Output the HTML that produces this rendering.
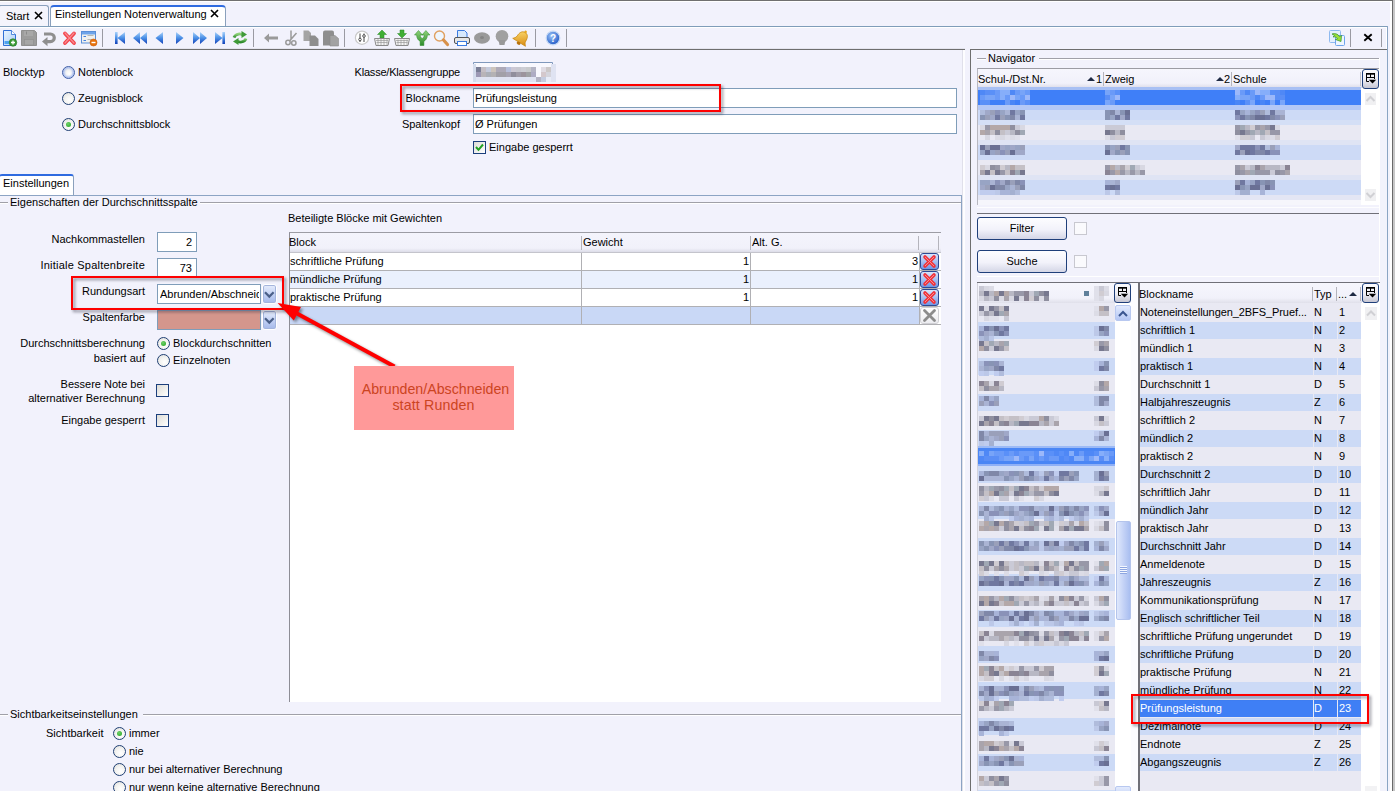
<!DOCTYPE html>
<html lang="de"><head><meta charset="utf-8"><title>Einstellungen Notenverwaltung</title>
<style>
*{box-sizing:border-box;margin:0;padding:0}
html,body{width:1395px;height:791px;overflow:hidden}
body{background:#f2f2fc;font-family:"Liberation Sans",sans-serif;font-size:11px;color:#000;position:relative;line-height:13px}
.a{position:absolute}
.t{position:absolute;white-space:nowrap;line-height:13px;height:13px}
.r{text-align:right}
.hl{position:absolute;height:1px;background:#a0a0a8}
.et{box-shadow:0 1px 0 #fff}
.vl{position:absolute;width:1px;background:#a0a0a8}
.inp{position:absolute;background:#fff;border:1px solid #7f9db9}
.radio{position:absolute;width:13px;height:13px;border-radius:50%;border:1px solid #1f3f73;background:radial-gradient(circle at 60% 65%,#fff 0,#f4f4f2 45%,#dcdcd8 100%)}
.radio.on::after{content:"";position:absolute;left:3px;top:3px;width:5px;height:5px;border-radius:50%;background:radial-gradient(circle at 40% 35%,#6fd06a,#23a41f)}
.chk{position:absolute;width:13px;height:13px;border:1px solid #1c3f7c;background:linear-gradient(135deg,#dddcd6,#fff)}
.redbox{position:absolute;border:2px solid #fe0000;filter:drop-shadow(2.5px 2.5px 1.6px rgba(30,30,50,.5))}
.ddb{width:15px;height:20px;border:1px solid #fff;border-radius:3px;background:linear-gradient(#e6edfc 0,#c4d2f4 50%,#a4b8ea 100%);box-shadow:inset 0 0 0 1px #a4b4dc}
.ddb svg{position:absolute;left:0;top:0}
.xb{width:19px;height:17px;border:1px solid #2c4a94;border-radius:3px;background:linear-gradient(#d8e4fc 0,#a9c0f0 50%,#6f96e4 100%);overflow:hidden}
.xb svg{position:absolute;left:-1px;top:-1px}
.xb.off{border-color:#d0d0d4;background:linear-gradient(#fff,#ececf0)}
.tri{position:absolute;width:0;height:0;border-left:4px solid transparent;border-right:4px solid transparent;border-bottom:4px solid #1e2a44}
.cho{position:absolute;width:17px;height:20px;border:1px solid #1f3f7a;border-radius:3px;background:linear-gradient(#fbfbfe 0,#ececf4 55%,#c6c6d2 100%)}
.btn{position:absolute;width:90px;height:23px;border:1px solid #1f3f7a;border-radius:3px;background:linear-gradient(#fdfdff 0,#f2f2fa 55%,#d4d6e6 100%);text-align:center;line-height:20px;font-size:11px}
.sbb{position:absolute;width:16px;height:16px;border:1px solid #b8c8f0;border-radius:2px;background:linear-gradient(#e2eafd,#b4c6f4)}
.cho svg{position:absolute;left:0;top:0}
</style></head><body>
<!-- window chrome -->
<div class="a" style="left:0;top:0;width:1392px;height:1px;background:#707070"></div>
<div class="a" style="left:0;top:1px;width:1392px;height:1px;background:#fff"></div>
<div class="a" style="left:1390px;top:1px;width:2px;height:790px;background:#fff"></div>
<div class="a" style="left:1392px;top:0;width:1px;height:791px;background:#6a6a6a"></div>
<div class="a" style="left:1393px;top:0;width:2px;height:791px;background:#c8c8c8"></div>
<!-- tabs -->
<div class="a" style="left:0;top:26px;width:1388px;height:1px;background:#7f9db9"></div>
<div class="a" style="left:1387px;top:26px;width:1px;height:765px;background:#8aa4c4"></div>
<div class="a" style="left:0;top:27px;width:1387px;height:1px;background:#fff"></div>
<div class="a" style="left:1386px;top:27px;width:1px;height:22px;background:#fff"></div>
<div class="a" style="left:-2px;top:5px;width:51px;height:21px;border:1px solid #8aa0bc;border-bottom:none;border-radius:3px 3px 0 0;background:#f4f4fc"></div>
<div class="t" style="left:6px;top:10px">Start</div>
<svg class="a" style="left:34px;top:11px" width="9" height="9" viewBox="0 0 9 9"><path d="M1 1L8 8M8 1L1 8" stroke="#000" stroke-width="1.6"/></svg>
<div class="a" style="left:50px;top:5px;width:176px;height:21px;border:1px solid #8aa0bc;border-bottom:none;border-top:2px solid #2f6be0;border-radius:4px 4px 0 0;background:#fff"></div>
<div class="t" style="left:55px;top:8px">Einstellungen Notenverwaltung</div>
<svg class="a" style="left:210px;top:9px" width="9" height="9" viewBox="0 0 9 9"><path d="M1 1L8 8M8 1L1 8" stroke="#000" stroke-width="1.6"/></svg>
<!--TABS_END-->
<!-- toolbar -->
<svg class="a" style="left:0;top:28px" width="1388" height="21" viewBox="0 28 1388 21">
<defs>
<linearGradient id="gb" x1="0" y1="0" x2="0" y2="1"><stop offset="0" stop-color="#a9d2fa"/><stop offset=".5" stop-color="#4a8fe6"/><stop offset="1" stop-color="#1240b8"/></linearGradient>
<linearGradient id="gg" x1="0" y1="0" x2="0" y2="1"><stop offset="0" stop-color="#8fd27a"/><stop offset="1" stop-color="#2c8a2a"/></linearGradient>
<linearGradient id="gdoc" x1="0" y1="0" x2="1" y2="1"><stop offset="0" stop-color="#eaf4ff"/><stop offset="1" stop-color="#a8cdf6"/></linearGradient>
<linearGradient id="gold" x1="0" y1="0" x2="1" y2="1"><stop offset="0" stop-color="#ffe27a"/><stop offset="1" stop-color="#d88a10"/></linearGradient>
<radialGradient id="ghelp" cx=".4" cy=".35" r=".7"><stop offset="0" stop-color="#9cc4f8"/><stop offset="1" stop-color="#1c55c4"/></radialGradient>
</defs>
<!-- separators -->
<g stroke="#9a9aa2" stroke-width="1"><path d="M102.5 29v18M253.5 29v18M344.5 29v18M535.5 29v18M566.5 29v18M1350.5 29v18M1381.5 29v18"/></g>
<!-- new doc -->
<path d="M3.5 30.500h8l4 4v11h-12z" fill="url(#gdoc)" stroke="#2f6fd6"/><path d="M11.500 30.500v4h4" fill="#fff" stroke="#2f6fd6" stroke-width=".8"/><rect x="4.500" y="41" width="7" height="3" fill="#4fa3ee"/>
<circle cx="13" cy="42.500" r="3.800" fill="#3a9a35" stroke="#2a7a28" stroke-width=".6"/><path d="M11 42.500h4M13 40.500v4" stroke="#fff" stroke-width="1.300"/>
<!-- save gray -->
<path d="M21.500 30.500h13l2 2v13h-15z" fill="#9c9c9c" stroke="#909090"/><rect x="24" y="31" width="9" height="5" fill="#a8a8a8"/><rect x="26" y="31.500" width="1" height="3" fill="#8a8a8a"/><rect x="24.500" y="39.500" width="9" height="5.500" fill="#a6a6a6" stroke="#8e8e8e" stroke-width=".6"/>
<!-- undo gray -->
<path d="M44 34h6.500a3.800 3.800 0 0 1 0 7.600h-4" fill="none" stroke="#8f8f8f" stroke-width="3.200"/><path d="M42 41.600l5.500-4.600v9.200z" fill="#8f8f8f"/>
<!-- red X -->
<path d="M65 33.500l9 9.500M74 33.500l-9 9.500" stroke="#f2444c" stroke-width="3.800" stroke-linecap="round"/><path d="M65 33l9 10M74 33l-9 10" stroke="#f98a90" stroke-width="1.200" stroke-linecap="round"/>
<!-- form minus -->
<rect x="81.500" y="31.500" width="14" height="11.500" fill="#f0f0ee" stroke="#5a8fd8"/><rect x="82" y="32" width="13" height="2.500" fill="#6ea4ea"/><path d="M83.500 36.500h2.500M83.500 40.500h2.500" stroke="#3f7fe0" stroke-width="1.200"/><path d="M87.500 35.500h6M87.500 39.500h4" stroke="#b8b8b4" stroke-width="1"/>
<circle cx="93.500" cy="42.500" r="3.500" fill="#e8720c" stroke="#c85a08" stroke-width=".6"/><rect x="91.500" y="41.800" width="4" height="1.400" fill="#fff"/>
<!-- nav blue -->
<g fill="url(#gb)">
<rect x="115" y="32" width="2.600" height="12"/><path d="M125 32v12l-7.500-6z"/>
<path d="M140 32v12l-7-6zM147 32v12l-7-6z"/>
<path d="M163 32v12l-7.500-6z"/>
<path d="M176 32v12l7.500-6z"/>
<path d="M193 32v12l7-6zM200 32v12l7-6z"/>
<path d="M215 32v12l7.500-6z"/><rect x="222.400" y="32" width="2.600" height="12"/>
</g>
<!-- refresh green -->
<g fill="none" stroke="url(#gg)" stroke-width="2.800"><path d="M234 37.500c1.500-4 7-4.500 9.500-2"/><path d="M246 38.500c-1.500 4-7 4.500-9.500 2"/></g>
<path d="M241.500 31l5.500 3.500-5.500 3.500z" fill="#3f9a38"/><path d="M238.500 45l-5.500-3.500 5.500-3.500z" fill="#3f9a38"/>
<!-- arrow left gray -->
<path d="M264 38l5-4.500v3h9v3h-9v3z" fill="#9a9a9a"/>
<!-- scissors gray -->
<g fill="none" stroke="#9a9a9a" stroke-width="1.500"><path d="M291 30.500v9M296.500 33l-7 8"/><circle cx="288" cy="42.500" r="2.200"/><circle cx="293.800" cy="43" r="2.200"/></g>
<!-- copy gray -->
<path d="M303.500 30.500h5l2.500 2.500v8h-7.500z" fill="#a4a4a4"/><path d="M309.500 35.500h5.500l3.500 3.500v7h-9z" fill="#8e8e8e"/>
<!-- paste gray -->
<path d="M323 32.500q0-2 2-2h7q2 0 2 2v13h-11z" fill="#8e8e8e"/><path d="M330 35.500h5l3.500 3v7.500h-8.500z" fill="#a2a2a2" stroke="#8a8a8a" stroke-width=".6"/>
<!-- sliders circle -->
<circle cx="362" cy="37.700" r="6.600" fill="#fff" stroke="#c9c9c9" stroke-width="1.200"/><path d="M360 33.500v8.500M364 33.500v8.500" stroke="#444" stroke-width="1"/><circle cx="360" cy="39.500" r="1.300" fill="#fff" stroke="#333" stroke-width=".8"/><circle cx="364" cy="36" r="1.300" fill="#fff" stroke="#333" stroke-width=".8"/>
<!-- basket up -->
<path d="M382 30l4.500 4.500h-2.500v3.500h-4v-3.500h-2.500z" fill="#3fae34" stroke="#2a8a26" stroke-width=".5"/>
<path d="M374.500 38.500h15l-1.500 7h-12z" fill="#f4f4f4" stroke="#8a8a8a"/><path d="M376 40.500h12M376.500 42.500h11M378 39v6M381 39v6M384 39v6M387 39v6" stroke="#9a9a9a" stroke-width=".7"/>
<!-- basket down -->
<path d="M402 38l4.500-4.500h-2.500v-3.500h-4v3.500h-2.500z" fill="#3fae34" stroke="#2a8a26" stroke-width=".5"/>
<path d="M394.500 38.500h15l-1.500 7h-12z" fill="#f4f4f4" stroke="#8a8a8a"/><path d="M396 40.500h12M396.500 42.500h11M398 39.500v6M401 39.500v6M404 39.500v6M407 39.500v6" stroke="#9a9a9a" stroke-width=".7"/>
<!-- fork green -->
<path d="M414.500 35l4-4.500 4 4.500h-2.300c0 2 1 3 2 3.500 1-.5 2-1.500 2-3.500h-2.300l4-4.500 4 4.500h-2.500c0 3.500-2 5.500-3.500 6.300v4.200h-3.800v-4.200c-1.500-.8-3.500-2.800-3.500-6.300z" fill="url(#gg)" stroke="#2a8a26" stroke-width=".5"/>
<!-- magnifier -->
<circle cx="439.500" cy="36" r="5" fill="#eef6ff" stroke="#e0a060" stroke-width="1.400"/><path d="M443.500 40l4 4.500" stroke="#d8914a" stroke-width="3.200" stroke-linecap="round"/>
<!-- printer -->
<path d="M457.500 30.500h7l2.500 2.500v5h-9.500z" fill="#d6e8fc" stroke="#3b7be0"/><rect x="454.500" y="37.500" width="15" height="6" rx="1.500" fill="#e6e6e6" stroke="#555"/><rect x="457.500" y="41.500" width="9" height="4" fill="#fff" stroke="#3b7be0"/>
<!-- gray oval -->
<ellipse cx="482" cy="38" rx="8" ry="5.800" fill="#9a9a9a"/><ellipse cx="482" cy="37.500" rx="2" ry="1.600" fill="#858585"/>
<!-- gray bulb -->
<circle cx="502" cy="36.300" r="6.300" fill="#a0a0a0"/><path d="M498.500 40h7l-1 5h-5z" fill="#989898"/>
<!-- bell -->
<g transform="rotate(32 521.5 38.500)"><path d="M521.500 31.500c3.800 0 5 3.500 5 7 0 2 1.500 3.500 2.500 4.500h-15c1-1 2.500-2.500 2.500-4.500 0-3.500 1.200-7 5-7z" fill="url(#gold)" stroke="#c8860c" stroke-width=".7"/><circle cx="521.500" cy="30.800" r="1.300" fill="#e8a820"/><ellipse cx="521.500" cy="44" rx="2" ry="1.500" fill="#b8720c"/></g>
<!-- help -->
<circle cx="553" cy="38" r="6.800" fill="url(#ghelp)" stroke="#c4d8f4" stroke-width="1.200"/>
<text x="553" y="42" font-family="Liberation Sans,sans-serif" font-size="10" font-weight="bold" fill="#fff" text-anchor="middle">?</text>
<!-- right icons -->
<rect x="1329.500" y="30.500" width="11" height="12" rx="1" fill="#e4f0fe" stroke="#8fbaf0"/><rect x="1335.500" y="35.500" width="9" height="10" rx="1" fill="#eef6ff" stroke="#6ea4ec"/>
<path d="M1332 34c3-1 6 0 7.500 2.500l2-1-.5 6-5.500-2 2-1c-1-1.500-3-2-4.500-1.500l1.500-1.500z" fill="#9adf3a" stroke="#2f8f2a" stroke-width=".7"/>
<path d="M1364.300 34.300l7.400 6.400M1371.700 34.300l-7.400 6.400" stroke="#000" stroke-width="1.900"/>
</svg>
<div class="a" style="left:0;top:49px;width:965px;height:1px;background:#6e6e6e"></div>
<div class="a" style="left:0;top:48px;width:965px;height:1px;background:#e4e4ee"></div>
<!--TOOLBAR_END-->
<!-- form top -->
<div class="t" style="left:3px;top:66px">Blocktyp</div>
<div class="radio" style="left:62px;top:66px;border-color:#3f5fa8;box-shadow:inset 0 0 2px 1.5px #a8bcf0"></div>
<div class="t" style="left:78px;top:66px">Notenblock</div>
<div class="radio" style="left:62px;top:92px"></div>
<div class="t" style="left:78px;top:92px">Zeugnisblock</div>
<div class="radio on" style="left:62px;top:118px"></div>
<div class="t" style="left:78px;top:118px">Durchschnittsblock</div>
<div class="t r" style="left:300px;width:160px;top:66px;letter-spacing:-.2px">Klasse/Klassengruppe</div>
<svg class="a" style="left:470px;top:60px;filter:blur(.3px)" width="90" height="24" viewBox="470 60 90 24"><rect x="473" y="63" width="80" height="14" fill="#f8f8fe"/><rect x="476" y="67" width="5" height="5" fill="#7a7e96"/><rect x="476" y="72" width="5" height="5" fill="#9c98b4"/><rect x="481" y="67" width="5" height="5" fill="#c4bec4"/><rect x="481" y="72" width="5" height="5" fill="#b8b4b8"/><rect x="486" y="67" width="5" height="5" fill="#c4cadc"/><rect x="486" y="72" width="5" height="5" fill="#acb0b8"/><rect x="491" y="67" width="5" height="5" fill="#ccc4bc"/><rect x="491" y="72" width="5" height="5" fill="#b4b2b4"/><rect x="496" y="67" width="5" height="5" fill="#aeaab8"/><rect x="496" y="72" width="5" height="5" fill="#a2a0a8"/><rect x="501" y="67" width="5" height="5" fill="#aeaab8"/><rect x="501" y="72" width="5" height="5" fill="#a2a0a8"/><rect x="506" y="67" width="5" height="5" fill="#b8c0dc"/><rect x="506" y="72" width="5" height="5" fill="#a8a4b4"/><rect x="511" y="67" width="5" height="5" fill="#ccc8d4"/><rect x="511" y="72" width="5" height="5" fill="#908e9c"/><rect x="516" y="67" width="5" height="5" fill="#c8c8d0"/><rect x="516" y="72" width="5" height="5" fill="#a09ca8"/><rect x="521" y="67" width="5" height="5" fill="#cccdd4"/><rect x="521" y="72" width="5" height="5" fill="#9c949c"/><rect x="526" y="67" width="5" height="5" fill="#c8cacc"/><rect x="526" y="72" width="5" height="5" fill="#a0a2a4"/><rect x="531" y="67" width="5" height="5" fill="#b4b4c4"/><rect x="531" y="72" width="5" height="5" fill="#aeacc4"/><rect x="541" y="67" width="5" height="5" fill="#e0dce4"/><rect x="546" y="67" width="5" height="5" fill="#ccc8c8"/><rect x="541" y="72" width="5" height="5" fill="#d4c8cc"/><rect x="546" y="72" width="5" height="5" fill="#d4d4dc"/><rect x="473" y="77" width="83" height="5" fill="#dfe3f2"/><rect x="536" y="77" width="5" height="5" fill="#b4b4c4"/><rect x="541" y="77" width="5" height="5" fill="#c4cce0"/><rect x="546" y="77" width="5" height="5" fill="#e8ecf8"/><rect x="473" y="64" width="3" height="18" fill="#d4dcec"/><rect x="551" y="64" width="5" height="18" fill="#dfe3f2"/><path d="M473.500 64v-1.500h79v1.500" fill="none" stroke="#7f98bc"/></svg>
<div class="t r" style="left:300px;width:160px;top:92px">Blockname</div>
<div class="inp" style="left:473px;top:88px;width:484px;height:20px"></div>
<div class="t" style="left:475px;top:92px">Prüfungsleistung</div>
<div class="t r" style="left:300px;width:160px;top:118px">Spaltenkopf</div>
<div class="inp" style="left:473px;top:114px;width:484px;height:20px"></div>
<div class="t" style="left:475px;top:118px">Ø Prüfungen</div>
<div class="chk" style="left:473px;top:141px"></div>
<svg class="a" style="left:475px;top:143px" width="9" height="9" viewBox="0 0 9 9"><path d="M1 4l2.500 2.800L8 1.500" fill="none" stroke="#21a121" stroke-width="2"/></svg>
<div class="t" style="left:489px;top:141px">Eingabe gesperrt</div>
<div class="redbox" style="left:400px;top:84px;width:321px;height:28px"></div>
<!--FORM_END-->
<!-- settings tab -->
<div class="a" style="left:0;top:195px;width:962px;height:1px;background:#8ca4c4"></div>
<div class="a" style="left:961px;top:195px;width:1px;height:596px;background:#8ca4c4"></div>
<div class="a" style="left:962px;top:50px;width:1px;height:741px;background:#e0e0ea"></div>
<div class="a" style="left:963px;top:50px;width:2px;height:741px;background:#fdfdff"></div>
<div class="a" style="left:-1px;top:174px;width:75px;height:21px;border:1px solid #8aa0bc;border-top:2px solid #2f6be0;border-bottom:none;border-radius:3px 3px 0 0;background:#fff"></div>
<div class="t" style="left:3px;top:177px">Einstellungen</div>
<!-- groupbox 1 -->
<div class="hl et" style="left:0;top:202px;width:8px"></div>
<div class="hl et" style="left:200px;top:202px;width:761px"></div>
<div class="t" style="left:10px;top:196px">Eigenschaften der Durchschnittsspalte</div>
<div class="t r" style="left:0;width:145px;top:233px">Nachkommastellen</div>
<div class="inp" style="left:157px;top:232px;width:40px;height:20px"></div>
<div class="t r" style="left:157px;width:35px;top:236px">2</div>
<div class="t r" style="left:0;width:145px;top:259px;letter-spacing:.22px">Initiale Spaltenbreite</div>
<div class="inp" style="left:157px;top:258px;width:40px;height:20px"></div>
<div class="t r" style="left:157px;width:35px;top:262px">73</div>
<div class="t r" style="left:0;width:145px;top:285px">Rundungsart</div>
<div class="inp" style="left:157px;top:284px;width:104px;height:20px;overflow:hidden"></div>
<div class="t" style="left:160px;top:288px;width:99px;overflow:hidden">Abrunden/Abschneiden</div>
<div class="a ddb" style="left:262px;top:284px"><svg width="13" height="18" viewBox="0 0 13 18"><path d="M2 7.300l4.300 4.300 4.300-4.300" fill="none" stroke="#4a5f88" stroke-width="2.200"/></svg></div>
<div class="t r" style="left:0;width:145px;top:311px">Spaltenfarbe</div>
<div class="inp" style="left:157px;top:310px;width:104px;height:20px;background:#d4968c"></div>
<div class="a ddb" style="left:262px;top:310px"><svg width="13" height="18" viewBox="0 0 13 18"><path d="M2 7.300l4.300 4.300 4.300-4.300" fill="none" stroke="#4a5f88" stroke-width="2.200"/></svg></div>
<div class="t r" style="left:0;width:145px;top:337px">Durchschnittsberechnung</div>
<div class="t r" style="left:0;width:145px;top:352px">basiert auf</div>
<div class="radio on" style="left:157px;top:337px"></div>
<div class="t" style="left:173px;top:337px">Blockdurchschnitten</div>
<div class="radio" style="left:157px;top:354px"></div>
<div class="t" style="left:173px;top:354px">Einzelnoten</div>
<div class="t r" style="left:0;width:145px;top:378px">Bessere Note bei</div>
<div class="t r" style="left:0;width:145px;top:392px">alternativer Berechnung</div>
<div class="chk" style="left:156px;top:384px"></div>
<div class="t r" style="left:0;width:145px;top:414px">Eingabe gesperrt</div>
<div class="chk" style="left:156px;top:414px"></div>
<!-- grid -->
<div class="t" style="left:288px;top:212px">Beteiligte Blöcke mit Gewichten</div>
<div class="a" style="left:289px;top:232px;width:652px;height:470px;background:#fff;border-left:1px solid #8e8e96;border-top:1px solid #9c9ca4"></div>
<div class="a" style="left:290px;top:233px;width:651px;height:19px;background:linear-gradient(#f4f4fc 0,#f1f1fa 80%,#dcdce8 100%)"></div>
<div class="vl" style="left:581px;top:236px;height:14px;background:#b4b4bc"></div>
<div class="vl" style="left:750px;top:236px;height:14px;background:#b4b4bc"></div>
<div class="vl" style="left:918px;top:236px;height:14px;background:#b4b4bc"></div>
<div class="vl" style="left:938px;top:236px;height:14px;background:#b4b4bc"></div>
<div class="t" style="left:289px;top:236px">Block</div>
<div class="t" style="left:583px;top:236px">Gewicht</div>
<div class="t" style="left:752px;top:236px">Alt. G.</div>
<div class="a" style="left:290px;top:271px;width:629px;height:17px;background:#eaf0fd"></div>
<div class="a" style="left:290px;top:307px;width:629px;height:17px;background:#c9d8f6"></div>
<div class="hl" style="left:290px;top:252px;width:651px;background:#c4c4cc"></div>
<div class="hl" style="left:290px;top:270px;width:651px;background:#b0b0b4"></div>
<div class="hl" style="left:290px;top:288px;width:651px;background:#b0b0b4"></div>
<div class="hl" style="left:290px;top:306px;width:651px;background:#b0b0b4"></div>
<div class="hl" style="left:290px;top:324px;width:651px;background:#b0b0b4"></div>
<div class="vl" style="left:581px;top:253px;height:71px;background:#b0b0b4"></div>
<div class="vl" style="left:750px;top:253px;height:71px;background:#b0b0b4"></div>
<div class="vl" style="left:919px;top:253px;height:71px;background:#b0b0b4"></div>
<div class="t" style="left:290px;top:255px">schriftliche Prüfung</div>
<div class="t" style="left:290px;top:273px">mündliche Prüfung</div>
<div class="t" style="left:290px;top:291px">praktische Prüfung</div>
<div class="t r" style="left:700px;width:49px;top:255px">1</div>
<div class="t r" style="left:700px;width:49px;top:273px">1</div>
<div class="t r" style="left:700px;width:49px;top:291px">1</div>
<div class="t r" style="left:860px;width:58px;top:255px">3</div>
<div class="t r" style="left:860px;width:58px;top:273px">1</div>
<div class="t r" style="left:860px;width:58px;top:291px">1</div>
<div class="a xb" style="left:920px;top:253px"><svg width="19" height="17" viewBox="0 0 19 17"><path d="M5 4l9 9M14 4l-9 9" stroke="#f0343c" stroke-width="3.600" stroke-linecap="round"/><path d="M5 4l9 9M14 4l-9 9" stroke="#fa8a8e" stroke-width="1"/></svg></div>
<div class="a xb" style="left:920px;top:271px"><svg width="19" height="17" viewBox="0 0 19 17"><path d="M5 4l9 9M14 4l-9 9" stroke="#f0343c" stroke-width="3.600" stroke-linecap="round"/><path d="M5 4l9 9M14 4l-9 9" stroke="#fa8a8e" stroke-width="1"/></svg></div>
<div class="a xb" style="left:920px;top:289px"><svg width="19" height="17" viewBox="0 0 19 17"><path d="M5 4l9 9M14 4l-9 9" stroke="#f0343c" stroke-width="3.600" stroke-linecap="round"/><path d="M5 4l9 9M14 4l-9 9" stroke="#fa8a8e" stroke-width="1"/></svg></div>
<div class="a xb off" style="left:920px;top:307px"><svg width="19" height="17" viewBox="0 0 19 17"><path d="M4.500 3.500l10 10M14.500 3.500l-10 10" stroke="#8c8c8c" stroke-width="2.800" stroke-linecap="round"/></svg></div>
<!-- groupbox 2 -->
<div class="hl et" style="left:0;top:714px;width:8px"></div>
<div class="hl et" style="left:143px;top:714px;width:818px"></div>
<div class="t" style="left:10px;top:708px">Sichtbarkeitseinstellungen</div>
<div class="t" style="left:46px;top:727px">Sichtbarkeit</div>
<div class="radio on" style="left:113px;top:727px"></div>
<div class="t" style="left:129px;top:727px">immer</div>
<div class="radio" style="left:113px;top:745px"></div>
<div class="t" style="left:129px;top:745px">nie</div>
<div class="radio" style="left:113px;top:763px"></div>
<div class="t" style="left:129px;top:763px">nur bei alternativer Berechnung</div>
<div class="radio" style="left:113px;top:781px"></div>
<div class="t" style="left:129px;top:781px">nur wenn keine alternative Berechnung</div>
<!--SETTINGS_END-->
<!-- right panel -->
<div class="a" style="left:970px;top:49px;width:417px;height:1px;background:#6e6e6e"></div>
<div class="a" style="left:970px;top:49px;width:1px;height:742px;background:#6e6e6e"></div>
<div class="hl et" style="left:977px;top:58px;width:9px"></div>
<div class="hl et" style="left:1039px;top:58px;width:341px"></div>
<div class="t" style="left:988px;top:52px">Navigator</div>
<div class="a" style="left:977px;top:68px;width:403px;height:137px;background:#fff;border-top:1px solid #9c9ca4;border-left:1px solid #b8b8c0"></div>
<div class="a" style="left:978px;top:69px;width:384px;height:19px;background:linear-gradient(#f6f6fd 0,#f1f1fa 75%,#dcdce8 100%)"></div>
<div class="t" style="left:978px;top:73px">Schul-/Dst.Nr.</div>
<div class="t" style="left:1105px;top:73px">Zweig</div>
<div class="t" style="left:1233px;top:73px">Schule</div>
<div class="t r" style="left:1080px;width:22px;top:73px">1</div>
<div class="t r" style="left:1208px;width:22px;top:73px">2</div>
<div class="tri" style="left:1087px;top:77px"></div>
<div class="tri" style="left:1216px;top:77px"></div>
<div class="vl" style="left:1103px;top:72px;height:14px;background:#b4b4bc"></div>
<div class="vl" style="left:1231px;top:72px;height:14px;background:#b4b4bc"></div>
<div class="vl" style="left:1360px;top:72px;height:14px;background:#c4c4cc"></div>
<div class="a" style="left:978px;top:87px;width:383px;height:3px;background:#a8c0f4"></div>
<div class="a" style="left:978px;top:90px;width:383px;height:15px;background:#3f7ff8"></div>
<div class="a" style="left:978px;top:105px;width:383px;height:5px;background:#b4c8f6"></div>
<div class="a" style="left:978px;top:110px;width:383px;height:10px;background:#cddaf6"></div>
<div class="a" style="left:978px;top:120px;width:383px;height:5px;background:#d4dff6"></div>
<div class="a" style="left:978px;top:125px;width:383px;height:15px;background:#e9e9f3"></div>
<div class="a" style="left:978px;top:140px;width:383px;height:5px;background:#dfe4f4"></div>
<div class="a" style="left:978px;top:145px;width:383px;height:15px;background:#cddaf6"></div>
<div class="a" style="left:978px;top:160px;width:383px;height:15px;background:#e9e9f3"></div>
<div class="a" style="left:978px;top:175px;width:383px;height:5px;background:#dfe4f4"></div>
<div class="a" style="left:978px;top:180px;width:383px;height:15px;background:#cddaf6"></div>
<div class="a" style="left:978px;top:195px;width:383px;height:5px;background:#e4e6f4"></div>
<div class="a" style="left:978px;top:200px;width:383px;height:5px;background:#f6f6fc"></div>
<svg class="a" style="left:975px;top:85px;filter:blur(.4px)" width="390" height="120" viewBox="975 85 390 120"><path fill="#4f88f6" d="M980 90h5v5h-5zM1010 90h5v5h-5zM1245 90h5v5h-5zM1280 90h5v5h-5zM1255 95h5v5h-5z"/><path fill="#5a8ef6" d="M985 90h5v5h-5zM1105 95h5v5h-5zM1275 90h5v5h-5zM1275 95h5v5h-5zM1280 95h5v5h-5z"/><path fill="#5a90f8" d="M990 90h5v5h-5zM980 100h5v5h-5zM985 100h5v5h-5zM1025 100h5v5h-5zM1115 90h5v5h-5zM1270 90h5v5h-5zM1245 100h5v5h-5z"/><path fill="#6a9af8" d="M995 90h5v5h-5zM1015 90h5v5h-5zM1025 90h5v5h-5zM980 95h5v5h-5zM995 95h5v5h-5zM1005 95h5v5h-5zM1020 95h5v5h-5zM1005 100h5v5h-5zM1020 100h5v5h-5zM1110 90h5v5h-5zM1110 100h5v5h-5zM1240 90h5v5h-5zM1250 90h5v5h-5zM1250 95h5v5h-5zM1260 95h5v5h-5z"/><path fill="#86aefa" d="M1000 90h5v5h-5zM1005 90h5v5h-5zM1000 95h5v5h-5zM1260 90h5v5h-5zM1265 90h5v5h-5zM1235 95h5v5h-5z"/><path fill="#78a4f8" d="M1020 90h5v5h-5zM985 95h5v5h-5zM990 95h5v5h-5zM1015 95h5v5h-5zM1105 90h5v5h-5zM1110 95h5v5h-5zM1240 95h5v5h-5zM1245 95h5v5h-5z"/><path fill="#9cb8fa" d="M1010 95h5v5h-5zM1025 95h5v5h-5zM1115 95h5v5h-5zM1235 90h5v5h-5zM1255 90h5v5h-5zM1265 95h5v5h-5zM1270 95h5v5h-5z"/><path fill="#4a86f6" d="M1010 100h5v5h-5zM1235 100h5v5h-5zM1260 100h5v5h-5z"/><path fill="#7aa6fa" d="M1105 100h5v5h-5zM1250 100h5v5h-5zM1270 100h5v5h-5zM1280 100h5v5h-5z"/><path fill="#b0bcdc" d="M980 110h5v5h-5zM1265 110h5v5h-5zM1265 145h5v5h-5zM1015 190h5v5h-5zM1115 190h5v5h-5z"/><path fill="#a0a8c8" d="M985 110h5v5h-5zM990 115h5v5h-5zM1120 115h5v5h-5zM1000 145h5v5h-5zM1010 145h5v5h-5zM1015 150h5v5h-5zM1020 150h5v5h-5zM1110 150h5v5h-5zM1235 145h5v5h-5zM1000 180h5v5h-5zM980 185h5v5h-5zM1115 180h5v5h-5zM1260 185h5v5h-5z"/><path fill="#9aa0ba" d="M990 110h5v5h-5zM985 115h5v5h-5zM1000 115h5v5h-5zM1260 110h5v5h-5zM1280 115h5v5h-5zM985 145h5v5h-5zM1020 145h5v5h-5zM995 150h5v5h-5zM1005 150h5v5h-5zM1115 145h5v5h-5zM1120 150h5v5h-5zM1270 145h5v5h-5zM1240 150h5v5h-5zM1010 180h5v5h-5zM985 185h5v5h-5zM1015 185h5v5h-5zM1235 180h5v5h-5z"/><path fill="#8a92b8" d="M995 110h5v5h-5zM1255 110h5v5h-5zM1235 115h5v5h-5zM1275 115h5v5h-5zM1000 150h5v5h-5zM1255 145h5v5h-5zM1270 150h5v5h-5zM1275 150h5v5h-5zM995 180h5v5h-5zM1020 180h5v5h-5zM1270 185h5v5h-5z"/><path fill="#98a4c4" d="M1000 110h5v5h-5zM1015 110h5v5h-5zM1110 115h5v5h-5zM1240 110h5v5h-5zM1250 110h5v5h-5zM1005 145h5v5h-5zM1015 145h5v5h-5zM980 150h5v5h-5zM990 150h5v5h-5zM1110 145h5v5h-5zM980 180h5v5h-5zM985 180h5v5h-5zM1005 185h5v5h-5zM1250 180h5v5h-5zM1245 185h5v5h-5z"/><path fill="#aab4d4" d="M1005 110h5v5h-5zM1015 115h5v5h-5zM1115 110h5v5h-5zM1275 110h5v5h-5zM1280 110h5v5h-5zM990 180h5v5h-5zM1010 185h5v5h-5zM1110 180h5v5h-5z"/><path fill="#7078a0" d="M1010 110h5v5h-5zM995 115h5v5h-5zM1020 115h5v5h-5zM1115 115h5v5h-5zM1125 115h5v5h-5zM1235 110h5v5h-5zM1270 110h5v5h-5zM1240 115h5v5h-5zM1265 115h5v5h-5zM1120 145h5v5h-5zM1240 145h5v5h-5zM1245 145h5v5h-5zM1250 145h5v5h-5zM1260 145h5v5h-5zM1235 150h5v5h-5zM1250 150h5v5h-5zM1265 150h5v5h-5zM1105 185h5v5h-5zM1115 185h5v5h-5zM1240 180h5v5h-5zM1255 180h5v5h-5z"/><path fill="#8894b4" d="M1020 110h5v5h-5zM980 115h5v5h-5zM1005 115h5v5h-5zM1105 110h5v5h-5zM1120 110h5v5h-5zM1105 115h5v5h-5zM1245 115h5v5h-5zM1105 145h5v5h-5zM1125 145h5v5h-5zM1115 150h5v5h-5zM1125 150h5v5h-5zM1260 180h5v5h-5zM1270 180h5v5h-5zM1240 185h5v5h-5z"/><path fill="#8088a8" d="M1010 115h5v5h-5zM1110 110h5v5h-5zM1250 115h5v5h-5zM1270 115h5v5h-5zM1255 150h5v5h-5zM1260 150h5v5h-5zM1005 180h5v5h-5zM1015 180h5v5h-5zM995 185h5v5h-5zM1000 185h5v5h-5zM1020 185h5v5h-5zM1265 180h5v5h-5z"/><path fill="#6a7094" d="M1125 110h5v5h-5zM1255 115h5v5h-5zM1260 115h5v5h-5zM980 145h5v5h-5zM990 145h5v5h-5zM995 145h5v5h-5zM985 150h5v5h-5zM1010 150h5v5h-5zM1105 150h5v5h-5zM1245 150h5v5h-5zM990 185h5v5h-5zM1110 185h5v5h-5zM1235 185h5v5h-5zM1250 185h5v5h-5zM1255 185h5v5h-5zM1265 185h5v5h-5z"/><path fill="#a8b4d8" d="M1245 110h5v5h-5zM1275 145h5v5h-5zM1000 190h5v5h-5zM1005 190h5v5h-5zM1105 180h5v5h-5zM1245 180h5v5h-5zM1260 190h5v5h-5z"/><path fill="#d8d8e2" d="M980 125h5v5h-5zM1020 125h5v5h-5zM985 135h5v5h-5zM1000 135h5v5h-5zM1275 125h5v5h-5zM1265 135h5v5h-5zM985 165h5v5h-5zM1140 165h5v5h-5z"/><path fill="#9898a8" d="M985 125h5v5h-5zM1235 125h5v5h-5zM1255 125h5v5h-5zM1265 125h5v5h-5zM1245 130h5v5h-5zM1270 130h5v5h-5zM1275 130h5v5h-5zM995 165h5v5h-5zM1000 170h5v5h-5zM1105 165h5v5h-5zM1110 170h5v5h-5zM1120 170h5v5h-5zM1130 170h5v5h-5zM1140 170h5v5h-5zM1235 165h5v5h-5zM1240 170h5v5h-5zM1255 170h5v5h-5zM1260 170h5v5h-5zM1265 170h5v5h-5zM1280 170h5v5h-5z"/><path fill="#b4a8a8" d="M990 125h5v5h-5zM995 125h5v5h-5zM1000 125h5v5h-5zM1005 125h5v5h-5zM980 130h5v5h-5zM1010 165h5v5h-5zM1110 165h5v5h-5zM1115 170h5v5h-5z"/><path fill="#8f8f9f" d="M1010 125h5v5h-5zM995 130h5v5h-5zM1015 130h5v5h-5zM1110 130h5v5h-5zM1120 130h5v5h-5zM1235 130h5v5h-5zM990 165h5v5h-5zM1235 170h5v5h-5zM1275 170h5v5h-5z"/><path fill="#cacad6" d="M1015 125h5v5h-5zM1005 130h5v5h-5zM1105 125h5v5h-5zM1110 125h5v5h-5zM1115 125h5v5h-5zM1120 125h5v5h-5zM1135 165h5v5h-5zM1245 165h5v5h-5zM1280 165h5v5h-5zM1270 170h5v5h-5z"/><path fill="#a9a4ac" d="M985 130h5v5h-5zM1260 125h5v5h-5zM980 170h5v5h-5zM1120 165h5v5h-5zM1240 165h5v5h-5zM1260 165h5v5h-5zM1245 170h5v5h-5zM1285 170h5v5h-5z"/><path fill="#c4c0c6" d="M990 130h5v5h-5zM1000 130h5v5h-5zM1265 130h5v5h-5zM1015 165h5v5h-5zM1020 165h5v5h-5zM990 170h5v5h-5zM1005 170h5v5h-5z"/><path fill="#b8b8c4" d="M1010 130h5v5h-5zM1115 130h5v5h-5zM1245 125h5v5h-5zM1255 130h5v5h-5zM1005 165h5v5h-5zM1115 165h5v5h-5zM1125 170h5v5h-5zM1135 170h5v5h-5zM1250 165h5v5h-5zM1265 165h5v5h-5zM1270 165h5v5h-5zM1275 165h5v5h-5z"/><path fill="#a0a8b4" d="M1020 130h5v5h-5zM1240 125h5v5h-5zM1250 130h5v5h-5zM1260 130h5v5h-5zM1015 170h5v5h-5zM1130 165h5v5h-5zM1250 170h5v5h-5z"/><path fill="#dcdce6" d="M995 135h5v5h-5zM1010 135h5v5h-5zM1105 135h5v5h-5zM1270 135h5v5h-5z"/><path fill="#e0e0ea" d="M1005 135h5v5h-5zM1015 135h5v5h-5zM1235 135h5v5h-5z"/><path fill="#77788f" d="M1105 130h5v5h-5zM1270 125h5v5h-5zM1240 130h5v5h-5zM985 170h5v5h-5zM995 170h5v5h-5zM1020 170h5v5h-5z"/><path fill="#c8c8d4" d="M1110 135h5v5h-5zM1250 135h5v5h-5zM1260 135h5v5h-5z"/><path fill="#d0ccd2" d="M1115 135h5v5h-5zM1120 135h5v5h-5zM1250 125h5v5h-5zM1240 135h5v5h-5zM1245 135h5v5h-5zM1275 135h5v5h-5zM980 165h5v5h-5zM1000 165h5v5h-5zM1125 165h5v5h-5z"/><path fill="#8a8494" d="M1010 170h5v5h-5zM1105 170h5v5h-5zM1255 165h5v5h-5zM1285 165h5v5h-5z"/><path fill="#c0ccee" d="M980 190h5v5h-5zM985 190h5v5h-5zM990 190h5v5h-5z"/><path fill="#bcc8e8" d="M995 190h5v5h-5zM1105 190h5v5h-5zM1235 190h5v5h-5z"/><path fill="#a4b0d0" d="M1010 190h5v5h-5zM1240 190h5v5h-5zM1245 190h5v5h-5z"/></svg>
<div class="cho" style="left:1362px;top:69px"><svg width="15" height="18" viewBox="0 0 15 18"><path d="M3.500 3v8.500h2.500M11.500 3v6M7.500 3v5M3 7.500h9" stroke="#000" fill="none"/><rect x="3" y="3" width="9" height="1.700"/><path d="M5.800 9.800h7.400l-3.700 3.700z" fill="#000"/></svg></div>
<div class="a" style="left:1362px;top:89px;width:17px;height:116px;background:#fff"></div>
<svg class="a" style="left:1365px;top:93px" width="11" height="12"><rect width="11" height="12" fill="#f0f0f2"/><path d="M1.500 8l4-4 4 4" fill="none" stroke="#d0d0d4" stroke-width="2"/></svg>
<svg class="a" style="left:1365px;top:189px" width="11" height="12"><rect width="11" height="12" fill="#f0f0f2"/><path d="M1.500 4l4 4 4-4" fill="none" stroke="#d0d0d4" stroke-width="2"/></svg>
<div class="hl" style="left:977px;top:207px;width:403px;background:#fdfdff"></div>
<div class="hl" style="left:977px;top:213px;width:403px;background:#707078"></div>
<div class="btn" style="left:977px;top:217px">Filter</div>
<div class="a" style="left:1074px;top:222px;width:13px;height:13px;border:1px solid #c8c8d0;background:#fafafd"></div>
<div class="btn" style="left:977px;top:250px">Suche</div>
<div class="a" style="left:1074px;top:255px;width:13px;height:13px;border:1px solid #c8c8d0;background:#fafafd"></div>
<div class="hl" style="left:977px;top:276px;width:403px;background:#fff"></div>
<div class="vl" style="left:1379px;top:58px;height:733px;background:#fff"></div>
<div class="a" style="left:977px;top:282px;width:403px;height:509px;background:#fcfcff;border-top:1px solid #707078"></div>
<div class="a" style="left:977px;top:283px;width:154px;height:508px;background:#e9e9f3;border-left:1px solid #d4d4dc"></div>
<div class="a" style="left:978px;top:283px;width:137px;height:20px;background:linear-gradient(#f6f6fd 0,#f1f1fa 75%,#e0e0ea 100%)"></div>
<div class="a" style="left:978px;top:304px;width:137px;height:17px;background:#e9e9f3"></div>
<div class="a" style="left:978px;top:322px;width:137px;height:17px;background:#ccdaf6"></div>
<div class="a" style="left:978px;top:340px;width:137px;height:17px;background:#e9e9f3"></div>
<div class="a" style="left:978px;top:358px;width:137px;height:17px;background:#ccdaf6"></div>
<div class="a" style="left:978px;top:376px;width:137px;height:17px;background:#e9e9f3"></div>
<div class="a" style="left:978px;top:394px;width:137px;height:17px;background:#ccdaf6"></div>
<div class="a" style="left:978px;top:412px;width:137px;height:17px;background:#e9e9f3"></div>
<div class="a" style="left:978px;top:430px;width:137px;height:17px;background:#ccdaf6"></div>
<div class="a" style="left:978px;top:447px;width:137px;height:19px;background:#4a86f5"></div>
<div class="a" style="left:978px;top:446px;width:137px;height:2px;background:#9cbaf6"></div>
<div class="a" style="left:978px;top:464px;width:137px;height:3px;background:#8fb0f6"></div>
<div class="a" style="left:978px;top:466px;width:137px;height:17px;background:#ccdaf6"></div>
<div class="a" style="left:978px;top:484px;width:137px;height:17px;background:#e9e9f3"></div>
<div class="a" style="left:978px;top:502px;width:137px;height:17px;background:#ccdaf6"></div>
<div class="a" style="left:978px;top:520px;width:137px;height:17px;background:#e9e9f3"></div>
<div class="a" style="left:978px;top:538px;width:137px;height:17px;background:#ccdaf6"></div>
<div class="a" style="left:978px;top:556px;width:137px;height:17px;background:#e9e9f3"></div>
<div class="a" style="left:978px;top:574px;width:137px;height:17px;background:#ccdaf6"></div>
<div class="a" style="left:978px;top:592px;width:137px;height:17px;background:#e9e9f3"></div>
<div class="a" style="left:978px;top:610px;width:137px;height:17px;background:#ccdaf6"></div>
<div class="a" style="left:978px;top:628px;width:137px;height:17px;background:#e9e9f3"></div>
<div class="a" style="left:978px;top:646px;width:137px;height:17px;background:#ccdaf6"></div>
<div class="a" style="left:978px;top:664px;width:137px;height:17px;background:#e9e9f3"></div>
<div class="a" style="left:978px;top:682px;width:137px;height:17px;background:#ccdaf6"></div>
<div class="a" style="left:978px;top:700px;width:137px;height:17px;background:#e9e9f3"></div>
<div class="a" style="left:978px;top:718px;width:137px;height:17px;background:#ccdaf6"></div>
<div class="a" style="left:978px;top:736px;width:137px;height:17px;background:#e9e9f3"></div>
<div class="a" style="left:978px;top:754px;width:137px;height:17px;background:#ccdaf6"></div>
<div class="a" style="left:978px;top:772px;width:137px;height:17px;background:#e9e9f3"></div>
<div class="a" style="left:978px;top:790px;width:137px;height:17px;background:#ccdaf6"></div>
<svg class="a" style="left:975px;top:283px;filter:blur(.4px)" width="140" height="508" viewBox="975 283 140 508"><path fill="#b8b8c4" d="M979 291h5v5h-5zM989 291h5v5h-5zM1009 291h5v5h-5zM984 296h5v5h-5zM989 311h5v5h-5zM994 341h5v5h-5zM999 386h5v5h-5zM1009 421h5v5h-5zM1039 421h5v5h-5zM984 486h5v5h-5zM1029 491h5v5h-5zM1099 491h5v5h-5zM1019 561h5v5h-5zM1034 561h5v5h-5zM994 596h5v5h-5zM1014 596h5v5h-5zM1034 601h5v5h-5zM1084 601h5v5h-5zM1099 601h5v5h-5zM1074 631h5v5h-5zM989 636h5v5h-5zM994 636h5v5h-5zM1009 636h5v5h-5zM1029 636h5v5h-5zM1029 671h5v5h-5zM1034 671h5v5h-5zM984 706h5v5h-5zM1004 706h5v5h-5zM1104 706h5v5h-5zM984 746h5v5h-5zM984 781h5v5h-5z"/><path fill="#77788f" d="M984 291h5v5h-5zM999 291h5v5h-5zM1044 291h5v5h-5zM1014 296h5v5h-5zM979 306h5v5h-5zM989 306h5v5h-5zM1004 306h5v5h-5zM994 311h5v5h-5zM979 341h5v5h-5zM994 346h5v5h-5zM1099 346h5v5h-5zM984 416h5v5h-5zM994 416h5v5h-5zM979 421h5v5h-5zM1019 421h5v5h-5zM1024 421h5v5h-5zM1099 416h5v5h-5zM1019 486h5v5h-5zM994 491h5v5h-5zM1014 491h5v5h-5zM1054 491h5v5h-5zM1104 491h5v5h-5zM994 521h5v5h-5zM1014 526h5v5h-5zM1044 526h5v5h-5zM1064 526h5v5h-5zM1074 526h5v5h-5zM1079 526h5v5h-5zM979 561h5v5h-5zM989 561h5v5h-5zM999 561h5v5h-5zM1069 561h5v5h-5zM1034 566h5v5h-5zM979 601h5v5h-5zM989 601h5v5h-5zM1024 631h5v5h-5zM1064 631h5v5h-5zM1034 636h5v5h-5zM1044 636h5v5h-5zM994 671h5v5h-5zM1099 671h5v5h-5zM1104 701h5v5h-5zM1014 741h5v5h-5zM989 746h5v5h-5zM999 776h5v5h-5z"/><path fill="#b4a8a8" d="M994 291h5v5h-5zM1004 291h5v5h-5zM1099 306h5v5h-5zM979 346h5v5h-5zM1104 381h5v5h-5zM1039 416h5v5h-5zM1044 486h5v5h-5zM1049 486h5v5h-5zM1054 486h5v5h-5zM989 491h5v5h-5zM984 521h5v5h-5zM999 521h5v5h-5zM1079 521h5v5h-5zM979 526h5v5h-5zM989 526h5v5h-5zM1064 561h5v5h-5zM1104 561h5v5h-5zM984 596h5v5h-5zM999 596h5v5h-5zM1064 596h5v5h-5zM984 601h5v5h-5zM1004 601h5v5h-5zM1009 601h5v5h-5zM1099 596h5v5h-5zM1104 636h5v5h-5zM979 666h5v5h-5zM999 666h5v5h-5zM979 671h5v5h-5zM1004 671h5v5h-5zM984 741h5v5h-5zM989 741h5v5h-5zM999 746h5v5h-5zM1014 746h5v5h-5zM979 776h5v5h-5z"/><path fill="#9898a8" d="M1014 291h5v5h-5zM1019 291h5v5h-5zM994 306h5v5h-5zM984 311h5v5h-5zM1104 306h5v5h-5zM999 346h5v5h-5zM1099 341h5v5h-5zM1099 386h5v5h-5zM994 486h5v5h-5zM979 491h5v5h-5zM1034 491h5v5h-5zM1039 491h5v5h-5zM1034 521h5v5h-5zM1079 561h5v5h-5zM1084 561h5v5h-5zM1084 566h5v5h-5zM989 596h5v5h-5zM1079 596h5v5h-5zM1024 601h5v5h-5zM1034 631h5v5h-5zM1044 631h5v5h-5zM1059 636h5v5h-5zM1099 636h5v5h-5zM1019 666h5v5h-5zM1034 666h5v5h-5zM979 706h5v5h-5zM994 706h5v5h-5zM1004 741h5v5h-5zM1004 776h5v5h-5zM994 781h5v5h-5zM1104 776h5v5h-5zM1104 781h5v5h-5z"/><path fill="#8a8494" d="M1024 291h5v5h-5zM1024 296h5v5h-5zM979 381h5v5h-5zM994 381h5v5h-5zM989 421h5v5h-5zM1004 421h5v5h-5zM1029 421h5v5h-5zM1034 421h5v5h-5zM1024 486h5v5h-5zM1019 491h5v5h-5zM1029 526h5v5h-5zM1044 561h5v5h-5zM1064 566h5v5h-5zM1069 596h5v5h-5zM994 601h5v5h-5zM1049 601h5v5h-5zM1074 601h5v5h-5zM984 631h5v5h-5zM1014 631h5v5h-5zM1059 631h5v5h-5zM1069 631h5v5h-5zM979 636h5v5h-5zM1069 636h5v5h-5zM1074 636h5v5h-5zM1084 636h5v5h-5zM989 666h5v5h-5zM989 671h5v5h-5zM1009 671h5v5h-5zM1014 671h5v5h-5zM1024 671h5v5h-5zM984 701h5v5h-5zM1004 701h5v5h-5zM994 746h5v5h-5zM1019 746h5v5h-5zM1104 746h5v5h-5z"/><path fill="#cacad6" d="M1029 291h5v5h-5zM979 311h5v5h-5zM989 346h5v5h-5zM979 416h5v5h-5zM1029 416h5v5h-5zM1034 416h5v5h-5zM1049 416h5v5h-5zM1049 421h5v5h-5zM1104 421h5v5h-5zM1009 491h5v5h-5zM1019 521h5v5h-5zM1064 521h5v5h-5zM999 526h5v5h-5zM1009 561h5v5h-5zM989 566h5v5h-5zM1009 566h5v5h-5zM1019 566h5v5h-5zM1074 596h5v5h-5zM1019 601h5v5h-5zM1029 601h5v5h-5zM1059 601h5v5h-5zM1069 601h5v5h-5zM1079 601h5v5h-5zM984 636h5v5h-5zM1014 636h5v5h-5zM1079 636h5v5h-5zM1024 666h5v5h-5zM1029 666h5v5h-5zM989 706h5v5h-5zM1009 706h5v5h-5zM1019 741h5v5h-5zM984 776h5v5h-5zM1099 776h5v5h-5zM1099 781h5v5h-5z"/><path fill="#a0a8b4" d="M1034 291h5v5h-5zM999 311h5v5h-5zM989 341h5v5h-5zM1004 341h5v5h-5zM1014 421h5v5h-5zM989 486h5v5h-5zM1004 486h5v5h-5zM1014 486h5v5h-5zM999 491h5v5h-5zM1024 491h5v5h-5zM989 521h5v5h-5zM1029 521h5v5h-5zM1049 521h5v5h-5zM1034 526h5v5h-5zM1049 526h5v5h-5zM1069 526h5v5h-5zM984 561h5v5h-5zM1054 561h5v5h-5zM1024 566h5v5h-5zM1079 566h5v5h-5zM1099 561h5v5h-5zM1104 566h5v5h-5zM1004 596h5v5h-5zM1014 601h5v5h-5zM1104 601h5v5h-5zM1019 631h5v5h-5zM1084 631h5v5h-5zM1064 636h5v5h-5zM984 666h5v5h-5zM1104 671h5v5h-5zM999 701h5v5h-5zM1009 701h5v5h-5zM999 706h5v5h-5zM999 781h5v5h-5z"/><path fill="#8f8f9f" d="M1039 291h5v5h-5zM994 296h5v5h-5zM1034 296h5v5h-5zM1044 296h5v5h-5zM984 346h5v5h-5zM1104 346h5v5h-5zM984 386h5v5h-5zM1099 381h5v5h-5zM989 416h5v5h-5zM1044 416h5v5h-5zM999 421h5v5h-5zM979 486h5v5h-5zM999 486h5v5h-5zM1049 491h5v5h-5zM1004 521h5v5h-5zM1004 526h5v5h-5zM1024 526h5v5h-5zM1104 521h5v5h-5zM1104 526h5v5h-5zM984 566h5v5h-5zM999 566h5v5h-5zM1044 566h5v5h-5zM1074 566h5v5h-5zM1009 596h5v5h-5zM1059 596h5v5h-5zM1104 596h5v5h-5zM1029 631h5v5h-5zM1019 636h5v5h-5zM1024 636h5v5h-5zM1019 671h5v5h-5zM1049 671h5v5h-5zM1099 666h5v5h-5zM989 776h5v5h-5zM1004 781h5v5h-5z"/><path fill="#d8d8e2" d="M979 296h5v5h-5zM1009 296h5v5h-5zM1019 296h5v5h-5zM984 286h5v5h-5zM1104 291h5v5h-5zM1099 296h5v5h-5zM984 306h5v5h-5zM984 316h5v5h-5zM1094 346h5v5h-5zM989 381h5v5h-5zM1024 416h5v5h-5zM1054 416h5v5h-5zM1104 416h5v5h-5zM1094 421h5v5h-5zM1039 496h5v5h-5zM1094 486h5v5h-5zM1099 486h5v5h-5zM1074 521h5v5h-5zM1099 521h5v5h-5zM1094 526h5v5h-5zM1059 561h5v5h-5zM1039 571h5v5h-5zM1064 571h5v5h-5zM1084 571h5v5h-5zM1044 596h5v5h-5zM1084 596h5v5h-5zM1039 601h5v5h-5zM1094 601h5v5h-5zM989 631h5v5h-5zM1054 636h5v5h-5zM1004 641h5v5h-5zM1044 641h5v5h-5zM1049 641h5v5h-5zM1059 641h5v5h-5zM1004 666h5v5h-5zM1014 666h5v5h-5zM979 676h5v5h-5zM999 676h5v5h-5zM1024 676h5v5h-5zM1044 676h5v5h-5zM1104 666h5v5h-5zM989 701h5v5h-5zM1009 741h5v5h-5zM1104 741h5v5h-5z"/><path fill="#c8c8d4" d="M989 296h5v5h-5zM979 286h5v5h-5zM1099 286h5v5h-5zM1004 316h5v5h-5zM1094 386h5v5h-5zM1094 416h5v5h-5zM984 496h5v5h-5zM999 496h5v5h-5zM1004 496h5v5h-5zM1014 496h5v5h-5zM1039 521h5v5h-5zM1054 571h5v5h-5zM1069 571h5v5h-5zM1074 571h5v5h-5zM1094 566h5v5h-5zM1054 601h5v5h-5zM1094 596h5v5h-5zM1054 631h5v5h-5zM1039 636h5v5h-5zM1034 641h5v5h-5zM1054 641h5v5h-5zM1064 641h5v5h-5zM1094 701h5v5h-5zM1094 746h5v5h-5z"/><path fill="#dcdce6" d="M999 296h5v5h-5zM1039 296h5v5h-5zM989 286h5v5h-5zM1104 286h5v5h-5zM1094 311h5v5h-5zM1094 381h5v5h-5zM989 496h5v5h-5zM1094 491h5v5h-5zM1054 521h5v5h-5zM1039 526h5v5h-5zM1039 561h5v5h-5zM984 571h5v5h-5zM1004 571h5v5h-5zM1024 571h5v5h-5zM1079 571h5v5h-5zM1054 596h5v5h-5zM1039 631h5v5h-5zM1094 631h5v5h-5zM1094 636h5v5h-5zM1049 676h5v5h-5z"/><path fill="#a9a4ac" d="M1004 296h5v5h-5zM1004 311h5v5h-5zM999 341h5v5h-5zM1104 341h5v5h-5zM984 381h5v5h-5zM989 386h5v5h-5zM994 386h5v5h-5zM1104 386h5v5h-5zM984 421h5v5h-5zM1044 421h5v5h-5zM1054 421h5v5h-5zM1034 486h5v5h-5zM1004 491h5v5h-5zM1009 521h5v5h-5zM1069 521h5v5h-5zM984 526h5v5h-5zM994 526h5v5h-5zM1009 526h5v5h-5zM1059 526h5v5h-5zM1084 526h5v5h-5zM994 566h5v5h-5zM1004 566h5v5h-5zM1029 566h5v5h-5zM1049 566h5v5h-5zM1099 566h5v5h-5zM979 596h5v5h-5zM1034 596h5v5h-5zM1049 596h5v5h-5zM1044 601h5v5h-5zM994 631h5v5h-5zM999 631h5v5h-5zM1004 631h5v5h-5zM1009 631h5v5h-5zM999 636h5v5h-5zM1049 636h5v5h-5zM1104 631h5v5h-5zM1044 666h5v5h-5zM1049 666h5v5h-5zM1039 671h5v5h-5zM1044 671h5v5h-5zM994 701h5v5h-5zM979 741h5v5h-5zM979 746h5v5h-5zM1004 746h5v5h-5zM994 776h5v5h-5z"/><path fill="#d0ccd2" d="M1029 296h5v5h-5zM1099 291h5v5h-5zM1094 341h5v5h-5zM999 381h5v5h-5zM1004 416h5v5h-5zM1019 416h5v5h-5zM1039 486h5v5h-5zM979 496h5v5h-5zM1034 496h5v5h-5zM1104 486h5v5h-5zM1014 521h5v5h-5zM1059 521h5v5h-5zM994 561h5v5h-5zM1039 566h5v5h-5zM979 571h5v5h-5zM1019 571h5v5h-5zM1059 571h5v5h-5zM1024 596h5v5h-5zM1024 641h5v5h-5zM1039 641h5v5h-5zM1099 631h5v5h-5zM1009 666h5v5h-5zM1039 666h5v5h-5zM984 676h5v5h-5zM989 676h5v5h-5zM1014 676h5v5h-5zM1094 666h5v5h-5zM1094 671h5v5h-5zM979 701h5v5h-5zM1099 701h5v5h-5zM994 741h5v5h-5zM1099 741h5v5h-5zM1094 781h5v5h-5z"/><path fill="#5f7f9a" d="M1084 291h5v5h-5z"/><path fill="#e0e0ea" d="M1094 286h5v5h-5zM1094 291h5v5h-5zM1094 296h5v5h-5zM989 316h5v5h-5zM994 316h5v5h-5zM1094 306h5v5h-5zM1019 496h5v5h-5zM1054 526h5v5h-5zM1094 521h5v5h-5zM1059 566h5v5h-5zM994 571h5v5h-5zM1044 571h5v5h-5zM1094 561h5v5h-5zM1039 596h5v5h-5zM979 641h5v5h-5zM1014 641h5v5h-5zM1029 641h5v5h-5zM1009 676h5v5h-5zM1019 676h5v5h-5zM1094 706h5v5h-5zM1094 741h5v5h-5zM1094 776h5v5h-5z"/><path fill="#c4c0c6" d="M999 306h5v5h-5zM1099 311h5v5h-5zM1104 311h5v5h-5zM984 341h5v5h-5zM1004 346h5v5h-5zM979 386h5v5h-5zM999 416h5v5h-5zM1009 416h5v5h-5zM1014 416h5v5h-5zM994 421h5v5h-5zM1099 421h5v5h-5zM1009 486h5v5h-5zM1029 486h5v5h-5zM984 491h5v5h-5zM1044 491h5v5h-5zM979 521h5v5h-5zM1024 521h5v5h-5zM1044 521h5v5h-5zM1084 521h5v5h-5zM1019 526h5v5h-5zM1099 526h5v5h-5zM1004 561h5v5h-5zM1014 561h5v5h-5zM1024 561h5v5h-5zM1029 561h5v5h-5zM1049 561h5v5h-5zM1074 561h5v5h-5zM979 566h5v5h-5zM1014 566h5v5h-5zM1054 566h5v5h-5zM1069 566h5v5h-5zM1019 596h5v5h-5zM1029 596h5v5h-5zM999 601h5v5h-5zM1064 601h5v5h-5zM979 631h5v5h-5zM1049 631h5v5h-5zM1079 631h5v5h-5zM1004 636h5v5h-5zM994 666h5v5h-5zM984 671h5v5h-5zM999 671h5v5h-5zM1099 706h5v5h-5zM999 741h5v5h-5zM1009 746h5v5h-5zM1099 746h5v5h-5zM979 781h5v5h-5zM989 781h5v5h-5z"/><path fill="#a8b4d8" d="M979 326h5v5h-5zM1099 361h5v5h-5zM979 396h5v5h-5zM989 396h5v5h-5zM1094 436h5v5h-5zM979 471h5v5h-5zM1034 471h5v5h-5zM1039 476h5v5h-5zM1054 476h5v5h-5zM1054 506h5v5h-5zM1039 511h5v5h-5zM1014 516h5v5h-5zM1029 516h5v5h-5zM1049 516h5v5h-5zM1094 546h5v5h-5zM1034 576h5v5h-5zM1059 576h5v5h-5zM1064 576h5v5h-5zM1104 576h5v5h-5zM1094 581h5v5h-5zM994 611h5v5h-5zM1009 611h5v5h-5zM1054 611h5v5h-5zM1059 611h5v5h-5zM1039 616h5v5h-5zM1059 616h5v5h-5zM1059 621h5v5h-5zM1104 611h5v5h-5zM994 651h5v5h-5zM1094 651h5v5h-5zM1094 656h5v5h-5zM989 696h5v5h-5zM1009 696h5v5h-5zM1014 696h5v5h-5zM1099 686h5v5h-5zM979 721h5v5h-5zM979 731h5v5h-5zM999 731h5v5h-5zM1099 721h5v5h-5zM979 756h5v5h-5zM989 756h5v5h-5zM1019 756h5v5h-5z"/><path fill="#7078a0" d="M984 326h5v5h-5zM1004 326h5v5h-5zM999 331h5v5h-5zM999 366h5v5h-5zM1099 366h5v5h-5zM1029 471h5v5h-5zM1059 471h5v5h-5zM1064 471h5v5h-5zM1044 476h5v5h-5zM1099 476h5v5h-5zM999 541h5v5h-5zM1009 541h5v5h-5zM1024 541h5v5h-5zM1084 541h5v5h-5zM1019 546h5v5h-5zM1074 546h5v5h-5zM1084 546h5v5h-5zM994 576h5v5h-5zM1039 576h5v5h-5zM989 581h5v5h-5zM994 581h5v5h-5zM1009 581h5v5h-5zM1019 581h5v5h-5zM1054 581h5v5h-5zM1099 576h5v5h-5zM1014 611h5v5h-5zM979 616h5v5h-5zM994 616h5v5h-5zM1019 616h5v5h-5zM1099 656h5v5h-5zM1024 691h5v5h-5zM1099 691h5v5h-5zM979 726h5v5h-5zM984 726h5v5h-5zM1009 726h5v5h-5zM984 756h5v5h-5zM999 761h5v5h-5zM1099 761h5v5h-5z"/><path fill="#8894b4" d="M989 326h5v5h-5zM994 331h5v5h-5zM989 361h5v5h-5zM1104 361h5v5h-5zM984 471h5v5h-5zM1014 471h5v5h-5zM1074 471h5v5h-5zM1004 476h5v5h-5zM1029 476h5v5h-5zM999 506h5v5h-5zM979 511h5v5h-5zM1009 511h5v5h-5zM1029 511h5v5h-5zM1059 511h5v5h-5zM1069 511h5v5h-5zM979 541h5v5h-5zM989 541h5v5h-5zM1079 541h5v5h-5zM984 546h5v5h-5zM1024 546h5v5h-5zM989 576h5v5h-5zM999 576h5v5h-5zM1014 576h5v5h-5zM1069 576h5v5h-5zM1079 581h5v5h-5zM1099 581h5v5h-5zM1049 611h5v5h-5zM1099 616h5v5h-5zM1049 686h5v5h-5zM1059 686h5v5h-5zM1029 691h5v5h-5zM1104 726h5v5h-5zM1004 756h5v5h-5zM984 761h5v5h-5zM994 761h5v5h-5zM1009 761h5v5h-5zM1104 756h5v5h-5z"/><path fill="#6a7094" d="M994 326h5v5h-5zM1099 326h5v5h-5zM1104 431h5v5h-5zM979 476h5v5h-5zM1099 471h5v5h-5zM1049 506h5v5h-5zM1034 511h5v5h-5zM1064 511h5v5h-5zM1104 511h5v5h-5zM1044 541h5v5h-5zM1054 541h5v5h-5zM1014 546h5v5h-5zM1024 576h5v5h-5zM979 581h5v5h-5zM999 581h5v5h-5zM1069 581h5v5h-5zM1024 611h5v5h-5zM1009 616h5v5h-5zM1024 616h5v5h-5zM1079 616h5v5h-5zM1084 616h5v5h-5zM1104 656h5v5h-5zM989 686h5v5h-5zM1009 686h5v5h-5zM1014 686h5v5h-5zM989 691h5v5h-5zM994 726h5v5h-5zM1004 726h5v5h-5zM1009 756h5v5h-5zM1104 761h5v5h-5z"/><path fill="#8a92b8" d="M999 326h5v5h-5zM979 331h5v5h-5zM1004 331h5v5h-5zM1104 331h5v5h-5zM984 361h5v5h-5zM994 361h5v5h-5zM989 401h5v5h-5zM1004 436h5v5h-5zM1009 471h5v5h-5zM1049 471h5v5h-5zM1019 506h5v5h-5zM1024 506h5v5h-5zM1084 506h5v5h-5zM989 511h5v5h-5zM994 511h5v5h-5zM1049 511h5v5h-5zM1079 511h5v5h-5zM1099 506h5v5h-5zM1014 541h5v5h-5zM994 546h5v5h-5zM984 576h5v5h-5zM1044 576h5v5h-5zM1049 576h5v5h-5zM1074 581h5v5h-5zM999 611h5v5h-5zM1004 611h5v5h-5zM1064 611h5v5h-5zM994 656h5v5h-5zM984 686h5v5h-5zM1004 686h5v5h-5zM1044 686h5v5h-5zM1054 686h5v5h-5zM999 691h5v5h-5zM1034 691h5v5h-5zM1054 691h5v5h-5zM1059 691h5v5h-5z"/><path fill="#a0a8c8" d="M984 331h5v5h-5zM989 366h5v5h-5zM1104 401h5v5h-5zM1004 431h5v5h-5zM994 436h5v5h-5zM1004 471h5v5h-5zM1034 476h5v5h-5zM1049 476h5v5h-5zM1014 511h5v5h-5zM1104 506h5v5h-5zM1099 511h5v5h-5zM1064 541h5v5h-5zM989 546h5v5h-5zM1029 546h5v5h-5zM1034 546h5v5h-5zM1044 546h5v5h-5zM1054 546h5v5h-5zM1104 546h5v5h-5zM1004 576h5v5h-5zM1009 576h5v5h-5zM1074 576h5v5h-5zM1024 581h5v5h-5zM1029 581h5v5h-5zM1084 581h5v5h-5zM1019 611h5v5h-5zM1034 611h5v5h-5zM1069 611h5v5h-5zM1079 611h5v5h-5zM1004 616h5v5h-5zM984 656h5v5h-5zM984 691h5v5h-5zM1014 691h5v5h-5zM1104 721h5v5h-5zM994 756h5v5h-5zM979 761h5v5h-5z"/><path fill="#aab4d4" d="M989 331h5v5h-5zM999 361h5v5h-5zM979 366h5v5h-5zM984 401h5v5h-5zM984 431h5v5h-5zM989 436h5v5h-5zM1099 431h5v5h-5zM1104 436h5v5h-5zM984 476h5v5h-5zM989 476h5v5h-5zM994 476h5v5h-5zM999 476h5v5h-5zM1014 476h5v5h-5zM979 506h5v5h-5zM1004 506h5v5h-5zM1034 506h5v5h-5zM1044 506h5v5h-5zM984 511h5v5h-5zM1019 511h5v5h-5zM1084 511h5v5h-5zM984 541h5v5h-5zM1019 541h5v5h-5zM1004 581h5v5h-5zM1049 581h5v5h-5zM989 616h5v5h-5zM1014 616h5v5h-5zM1029 616h5v5h-5zM1044 616h5v5h-5zM1064 616h5v5h-5zM984 651h5v5h-5zM989 651h5v5h-5zM1099 651h5v5h-5zM979 686h5v5h-5zM994 686h5v5h-5zM999 686h5v5h-5zM1034 686h5v5h-5zM1019 691h5v5h-5zM1049 691h5v5h-5zM999 721h5v5h-5zM1004 721h5v5h-5zM1014 756h5v5h-5zM1004 761h5v5h-5z"/><path fill="#b0bcdc" d="M979 336h5v5h-5zM979 361h5v5h-5zM999 371h5v5h-5zM1094 396h5v5h-5zM1094 401h5v5h-5zM1024 471h5v5h-5zM989 506h5v5h-5zM1014 506h5v5h-5zM1024 516h5v5h-5zM1044 516h5v5h-5zM1059 516h5v5h-5zM1074 516h5v5h-5zM1094 506h5v5h-5zM1029 541h5v5h-5zM1104 541h5v5h-5zM1019 576h5v5h-5zM1079 576h5v5h-5zM1084 576h5v5h-5zM1059 581h5v5h-5zM1039 611h5v5h-5zM1074 611h5v5h-5zM1054 621h5v5h-5zM1099 611h5v5h-5zM1019 686h5v5h-5zM1039 686h5v5h-5zM1019 696h5v5h-5zM1024 696h5v5h-5zM1044 696h5v5h-5zM1049 696h5v5h-5zM1009 721h5v5h-5zM1094 721h5v5h-5zM1094 756h5v5h-5zM1099 756h5v5h-5z"/><path fill="#a4b0d0" d="M984 336h5v5h-5zM989 441h5v5h-5zM1094 471h5v5h-5zM1094 476h5v5h-5zM1039 506h5v5h-5zM984 516h5v5h-5zM1019 516h5v5h-5zM1079 516h5v5h-5zM1059 546h5v5h-5zM1094 541h5v5h-5zM1034 581h5v5h-5zM1014 621h5v5h-5zM1034 621h5v5h-5zM1094 616h5v5h-5zM984 696h5v5h-5zM1039 696h5v5h-5zM1094 686h5v5h-5zM1094 691h5v5h-5z"/><path fill="#bcc8e8" d="M989 336h5v5h-5zM1094 326h5v5h-5zM1094 331h5v5h-5zM984 371h5v5h-5zM979 441h5v5h-5zM1039 471h5v5h-5zM1054 511h5v5h-5zM989 516h5v5h-5zM1054 516h5v5h-5zM1084 516h5v5h-5zM1094 511h5v5h-5zM1039 541h5v5h-5zM1039 546h5v5h-5zM989 621h5v5h-5zM1009 621h5v5h-5zM1044 621h5v5h-5zM1049 621h5v5h-5zM1079 621h5v5h-5zM1094 611h5v5h-5zM979 696h5v5h-5zM1034 696h5v5h-5zM1004 731h5v5h-5zM1094 726h5v5h-5z"/><path fill="#8088a8" d="M1104 326h5v5h-5zM994 366h5v5h-5zM1104 366h5v5h-5zM984 396h5v5h-5zM1099 396h5v5h-5zM1104 396h5v5h-5zM1099 401h5v5h-5zM979 431h5v5h-5zM979 436h5v5h-5zM1099 436h5v5h-5zM989 471h5v5h-5zM994 471h5v5h-5zM1024 476h5v5h-5zM1059 476h5v5h-5zM1069 476h5v5h-5zM1104 476h5v5h-5zM984 506h5v5h-5zM1029 506h5v5h-5zM1064 506h5v5h-5zM1074 506h5v5h-5zM1069 541h5v5h-5zM1004 546h5v5h-5zM1009 546h5v5h-5zM1099 546h5v5h-5zM1054 576h5v5h-5zM984 581h5v5h-5zM1014 581h5v5h-5zM984 611h5v5h-5zM989 611h5v5h-5zM1029 611h5v5h-5zM1044 611h5v5h-5zM1049 616h5v5h-5zM1069 616h5v5h-5zM1104 616h5v5h-5zM979 651h5v5h-5zM989 656h5v5h-5zM1024 686h5v5h-5zM979 691h5v5h-5zM1004 691h5v5h-5zM1039 691h5v5h-5zM1104 691h5v5h-5zM989 721h5v5h-5zM999 726h5v5h-5z"/><path fill="#98a4c4" d="M1099 331h5v5h-5zM984 366h5v5h-5zM994 396h5v5h-5zM984 436h5v5h-5zM999 471h5v5h-5zM1009 476h5v5h-5zM1074 476h5v5h-5zM994 506h5v5h-5zM1009 506h5v5h-5zM1069 506h5v5h-5zM1079 506h5v5h-5zM999 511h5v5h-5zM1024 511h5v5h-5zM1074 511h5v5h-5zM1034 541h5v5h-5zM1074 541h5v5h-5zM979 546h5v5h-5zM1049 546h5v5h-5zM1079 546h5v5h-5zM979 576h5v5h-5zM1044 581h5v5h-5zM1104 581h5v5h-5zM1084 611h5v5h-5zM999 616h5v5h-5zM1074 616h5v5h-5zM979 656h5v5h-5zM1104 651h5v5h-5zM1009 691h5v5h-5zM1044 691h5v5h-5zM1104 686h5v5h-5zM984 721h5v5h-5zM994 721h5v5h-5zM989 726h5v5h-5zM1099 726h5v5h-5zM989 761h5v5h-5z"/><path fill="#c0ccee" d="M979 371h5v5h-5zM994 371h5v5h-5zM1094 361h5v5h-5zM1094 366h5v5h-5zM984 441h5v5h-5zM1094 431h5v5h-5zM1054 471h5v5h-5zM1009 516h5v5h-5zM1069 516h5v5h-5zM1059 541h5v5h-5zM1094 576h5v5h-5zM1019 621h5v5h-5zM1029 621h5v5h-5zM1074 621h5v5h-5zM994 696h5v5h-5zM1029 696h5v5h-5zM1059 696h5v5h-5zM1094 761h5v5h-5z"/><path fill="#9aa0ba" d="M979 401h5v5h-5zM994 401h5v5h-5zM989 431h5v5h-5zM994 431h5v5h-5zM999 431h5v5h-5zM999 436h5v5h-5zM1019 471h5v5h-5zM1044 471h5v5h-5zM1069 471h5v5h-5zM1019 476h5v5h-5zM1064 476h5v5h-5zM1104 471h5v5h-5zM1059 506h5v5h-5zM1004 511h5v5h-5zM1044 511h5v5h-5zM994 541h5v5h-5zM1004 541h5v5h-5zM1049 541h5v5h-5zM999 546h5v5h-5zM1064 546h5v5h-5zM1069 546h5v5h-5zM1099 541h5v5h-5zM1029 576h5v5h-5zM1039 581h5v5h-5zM1064 581h5v5h-5zM979 611h5v5h-5zM984 616h5v5h-5zM1034 616h5v5h-5zM1054 616h5v5h-5zM1029 686h5v5h-5zM994 691h5v5h-5zM999 756h5v5h-5zM1014 761h5v5h-5zM1019 761h5v5h-5z"/><path fill="#86aefa" d="M979 451h5v5h-5zM1069 451h5v5h-5zM1099 451h5v5h-5zM1074 456h5v5h-5zM1079 456h5v5h-5zM1104 456h5v5h-5z"/><path fill="#4f88f6" d="M984 451h5v5h-5zM1054 451h5v5h-5zM1064 451h5v5h-5zM1074 451h5v5h-5zM1084 451h5v5h-5zM1089 451h5v5h-5zM979 456h5v5h-5zM1059 456h5v5h-5zM1069 456h5v5h-5z"/><path fill="#78a4f8" d="M989 451h5v5h-5zM1104 451h5v5h-5zM1004 456h5v5h-5zM1009 456h5v5h-5zM1029 456h5v5h-5zM1089 456h5v5h-5z"/><path fill="#6a9af8" d="M994 451h5v5h-5zM999 451h5v5h-5zM1009 451h5v5h-5zM1019 451h5v5h-5zM1024 451h5v5h-5zM1029 451h5v5h-5zM1079 451h5v5h-5zM1109 451h5v5h-5zM999 456h5v5h-5zM1019 456h5v5h-5zM1039 456h5v5h-5zM1049 456h5v5h-5zM1054 456h5v5h-5z"/><path fill="#5a90f8" d="M1004 451h5v5h-5zM1034 451h5v5h-5zM1049 451h5v5h-5zM1059 451h5v5h-5zM1094 451h5v5h-5z"/><path fill="#5a8ef6" d="M1014 451h5v5h-5zM1044 451h5v5h-5zM984 456h5v5h-5zM989 456h5v5h-5zM994 456h5v5h-5zM1024 456h5v5h-5zM1034 456h5v5h-5zM1044 456h5v5h-5zM1064 456h5v5h-5zM1084 456h5v5h-5zM1099 456h5v5h-5zM1109 456h5v5h-5z"/><path fill="#9cb8fa" d="M1039 451h5v5h-5zM1014 456h5v5h-5zM1094 456h5v5h-5z"/></svg>
<div class="cho" style="left:1114px;top:283px;height:20px"><svg width="15" height="18" viewBox="0 0 15 18"><path d="M3.500 3v8.500h2.500M11.500 3v6M7.500 3v5M3 7.500h9" stroke="#000" fill="none"/><rect x="3" y="3" width="9" height="1.700"/><path d="M5.800 9.800h7.400l-3.700 3.700z" fill="#000"/></svg></div>
<div class="a" style="left:1115px;top:303px;width:16px;height:488px;background:#fff"></div>
<div class="sbb" style="left:1115px;top:305px"><svg width="14" height="15"><path d="M3 10l4-4 4 4" fill="none" stroke="#3a5590" stroke-width="2"/></svg></div>
<div class="a" style="left:1116px;top:521px;width:15px;height:99px;border:1px solid #b4c4ec;border-radius:2px;background:linear-gradient(90deg,#dfe8fc 0,#c4d2f6 50%,#a9bef0 100%)"></div>
<div class="a" style="left:1120px;top:566px;width:7px;height:8px;background:repeating-linear-gradient(#f4f7ff 0,#f4f7ff 1px,#8ea6e0 1px,#8ea6e0 2px)"></div>
<div class="sbb" style="left:1115px;top:786px"></div>
<div class="a" style="left:1138px;top:283px;width:242px;height:508px;background:#fff;border-left:2px solid #707078"></div>
<div class="a" style="left:1140px;top:283px;width:222px;height:20px;background:linear-gradient(#f6f6fd 0,#f1f1fa 75%,#e0e0ea 100%)"></div>
<div class="t" style="left:1139px;top:288px">Blockname</div>
<div class="t" style="left:1314px;top:288px">Typ</div>
<div class="t" style="left:1338px;top:288px">...</div>
<div class="tri" style="left:1349px;top:292px"></div>
<div class="vl" style="left:1312px;top:287px;height:14px;background:#b4b4bc"></div>
<div class="vl" style="left:1336px;top:287px;height:14px;background:#b4b4bc"></div>
<div class="vl" style="left:1360px;top:287px;height:14px;background:#b4b4bc"></div>
<div class="a" style="left:1140px;top:303px;width:221px;height:488px;background:#e9e9f3"></div>
<div class="a" style="left:1140px;top:304px;width:221px;height:17px;background:#e9e9f3"></div>
<div class="t" style="left:1140px;top:306px;letter-spacing:-.08px">Noteneinstellungen_2BFS_Pruef...</div>
<div class="t" style="left:1314px;top:306px">N</div>
<div class="t" style="left:1339px;top:306px">1</div>
<div class="a" style="left:1140px;top:322px;width:221px;height:17px;background:#ccdaf6"></div>
<div class="t" style="left:1140px;top:324px">schriftlich 1</div>
<div class="t" style="left:1314px;top:324px">N</div>
<div class="t" style="left:1339px;top:324px">2</div>
<div class="a" style="left:1140px;top:340px;width:221px;height:17px;background:#e9e9f3"></div>
<div class="t" style="left:1140px;top:342px">mündlich 1</div>
<div class="t" style="left:1314px;top:342px">N</div>
<div class="t" style="left:1339px;top:342px">3</div>
<div class="a" style="left:1140px;top:358px;width:221px;height:17px;background:#ccdaf6"></div>
<div class="t" style="left:1140px;top:360px">praktisch 1</div>
<div class="t" style="left:1314px;top:360px">N</div>
<div class="t" style="left:1339px;top:360px">4</div>
<div class="a" style="left:1140px;top:376px;width:221px;height:17px;background:#e9e9f3"></div>
<div class="t" style="left:1140px;top:378px">Durchschnitt 1</div>
<div class="t" style="left:1314px;top:378px">D</div>
<div class="t" style="left:1339px;top:378px">5</div>
<div class="a" style="left:1140px;top:394px;width:221px;height:17px;background:#ccdaf6"></div>
<div class="t" style="left:1140px;top:396px">Halbjahreszeugnis</div>
<div class="t" style="left:1314px;top:396px">Z</div>
<div class="t" style="left:1339px;top:396px">6</div>
<div class="a" style="left:1140px;top:412px;width:221px;height:17px;background:#e9e9f3"></div>
<div class="t" style="left:1140px;top:414px">schriftlich 2</div>
<div class="t" style="left:1314px;top:414px">N</div>
<div class="t" style="left:1339px;top:414px">7</div>
<div class="a" style="left:1140px;top:430px;width:221px;height:17px;background:#ccdaf6"></div>
<div class="t" style="left:1140px;top:432px">mündlich 2</div>
<div class="t" style="left:1314px;top:432px">N</div>
<div class="t" style="left:1339px;top:432px">8</div>
<div class="a" style="left:1140px;top:448px;width:221px;height:17px;background:#e9e9f3"></div>
<div class="t" style="left:1140px;top:450px">praktisch 2</div>
<div class="t" style="left:1314px;top:450px">N</div>
<div class="t" style="left:1339px;top:450px">9</div>
<div class="a" style="left:1140px;top:466px;width:221px;height:17px;background:#ccdaf6"></div>
<div class="t" style="left:1140px;top:468px">Durchschnitt 2</div>
<div class="t" style="left:1314px;top:468px">D</div>
<div class="t" style="left:1339px;top:468px">10</div>
<div class="a" style="left:1140px;top:484px;width:221px;height:17px;background:#e9e9f3"></div>
<div class="t" style="left:1140px;top:486px">schriftlich Jahr</div>
<div class="t" style="left:1314px;top:486px">D</div>
<div class="t" style="left:1339px;top:486px">11</div>
<div class="a" style="left:1140px;top:502px;width:221px;height:17px;background:#ccdaf6"></div>
<div class="t" style="left:1140px;top:504px">mündlich Jahr</div>
<div class="t" style="left:1314px;top:504px">D</div>
<div class="t" style="left:1339px;top:504px">12</div>
<div class="a" style="left:1140px;top:520px;width:221px;height:17px;background:#e9e9f3"></div>
<div class="t" style="left:1140px;top:522px">praktisch Jahr</div>
<div class="t" style="left:1314px;top:522px">D</div>
<div class="t" style="left:1339px;top:522px">13</div>
<div class="a" style="left:1140px;top:538px;width:221px;height:17px;background:#ccdaf6"></div>
<div class="t" style="left:1140px;top:540px">Durchschnitt Jahr</div>
<div class="t" style="left:1314px;top:540px">D</div>
<div class="t" style="left:1339px;top:540px">14</div>
<div class="a" style="left:1140px;top:556px;width:221px;height:17px;background:#e9e9f3"></div>
<div class="t" style="left:1140px;top:558px">Anmeldenote</div>
<div class="t" style="left:1314px;top:558px">D</div>
<div class="t" style="left:1339px;top:558px">15</div>
<div class="a" style="left:1140px;top:574px;width:221px;height:17px;background:#ccdaf6"></div>
<div class="t" style="left:1140px;top:576px">Jahreszeugnis</div>
<div class="t" style="left:1314px;top:576px">Z</div>
<div class="t" style="left:1339px;top:576px">16</div>
<div class="a" style="left:1140px;top:592px;width:221px;height:17px;background:#e9e9f3"></div>
<div class="t" style="left:1140px;top:594px">Kommunikationsprüfung</div>
<div class="t" style="left:1314px;top:594px">N</div>
<div class="t" style="left:1339px;top:594px">17</div>
<div class="a" style="left:1140px;top:610px;width:221px;height:17px;background:#ccdaf6"></div>
<div class="t" style="left:1140px;top:612px">Englisch schriftlicher Teil</div>
<div class="t" style="left:1314px;top:612px">N</div>
<div class="t" style="left:1339px;top:612px">18</div>
<div class="a" style="left:1140px;top:628px;width:221px;height:17px;background:#e9e9f3"></div>
<div class="t" style="left:1140px;top:630px">schriftliche Prüfung ungerundet</div>
<div class="t" style="left:1314px;top:630px">D</div>
<div class="t" style="left:1339px;top:630px">19</div>
<div class="a" style="left:1140px;top:646px;width:221px;height:17px;background:#ccdaf6"></div>
<div class="t" style="left:1140px;top:648px">schriftliche Prüfung</div>
<div class="t" style="left:1314px;top:648px">D</div>
<div class="t" style="left:1339px;top:648px">20</div>
<div class="a" style="left:1140px;top:664px;width:221px;height:17px;background:#e9e9f3"></div>
<div class="t" style="left:1140px;top:666px">praktische Prüfung</div>
<div class="t" style="left:1314px;top:666px">N</div>
<div class="t" style="left:1339px;top:666px">21</div>
<div class="a" style="left:1140px;top:682px;width:221px;height:17px;background:#ccdaf6"></div>
<div class="t" style="left:1140px;top:684px">mündliche Prüfung</div>
<div class="t" style="left:1314px;top:684px">N</div>
<div class="t" style="left:1339px;top:684px">22</div>
<div class="a" style="left:1140px;top:700px;width:221px;height:17px;background:#3f7ff5"></div>
<div class="t" style="left:1140px;top:702px;color:#fff">Prüfungsleistung</div>
<div class="t" style="left:1314px;top:702px;color:#fff">D</div>
<div class="t" style="left:1339px;top:702px;color:#fff">23</div>
<div class="a" style="left:1140px;top:718px;width:221px;height:17px;background:#ccdaf6"></div>
<div class="t" style="left:1140px;top:720px">Dezimalnote</div>
<div class="t" style="left:1314px;top:720px">D</div>
<div class="t" style="left:1339px;top:720px">24</div>
<div class="a" style="left:1140px;top:736px;width:221px;height:17px;background:#e9e9f3"></div>
<div class="t" style="left:1140px;top:738px">Endnote</div>
<div class="t" style="left:1314px;top:738px">Z</div>
<div class="t" style="left:1339px;top:738px">25</div>
<div class="a" style="left:1140px;top:754px;width:221px;height:17px;background:#ccdaf6"></div>
<div class="t" style="left:1140px;top:756px">Abgangszeugnis</div>
<div class="t" style="left:1314px;top:756px">Z</div>
<div class="t" style="left:1339px;top:756px">26</div>
<div class="vl" style="left:1313px;top:304px;height:468px;background:#e9e9f3"></div>
<div class="vl" style="left:1337px;top:304px;height:468px;background:#e9e9f3"></div>
<div class="cho" style="left:1362px;top:283px;height:20px"><svg width="15" height="18" viewBox="0 0 15 18"><path d="M3.500 3v8.500h2.500M11.500 3v6M7.500 3v5M3 7.500h9" stroke="#000" fill="none"/><rect x="3" y="3" width="9" height="1.700"/><path d="M5.800 9.800h7.400l-3.700 3.700z" fill="#000"/></svg></div>
<div class="a" style="left:1362px;top:303px;width:17px;height:488px;background:#fff"></div>
<svg class="a" style="left:1365px;top:307px" width="12" height="13"><rect width="12" height="13" fill="#f0f0f2"/><path d="M2 8.500l4-4 4 4" fill="none" stroke="#d0d0d4" stroke-width="2"/></svg>
<div class="a" style="left:1365px;top:786px;width:12px;height:5px;background:#f2f2f4"></div>
<!--RIGHT_END-->
<!-- annotations -->
<div class="redbox" style="left:71px;top:276px;width:213px;height:34px"></div>
<div class="redbox" style="left:1131px;top:694px;width:238px;height:30px"></div>
<svg class="a" style="left:260px;top:290px;filter:drop-shadow(2px 2px 1.500px rgba(0,0,0,.45))" width="160" height="90" viewBox="260 290 160 90"><path d="M297 313.500L394.500 366.500" stroke="#fe0000" stroke-width="4"/><path d="M277.600 303.100L301 307.100L293.800 320.500z" fill="#fe0000"/></svg>
<div class="a" style="left:354px;top:366px;width:160px;height:64px;background:#ff9999;color:#cc4422;font-size:14.200px;line-height:15.500px;text-align:center;padding-top:16px;padding-left:3px;font-family:'Liberation Sans',sans-serif">Abrunden/Abschneiden<br><span style="position:relative;left:-2px;letter-spacing:.15px">statt Runden</span></div>
<!--OVERLAY_END-->
</body></html>
